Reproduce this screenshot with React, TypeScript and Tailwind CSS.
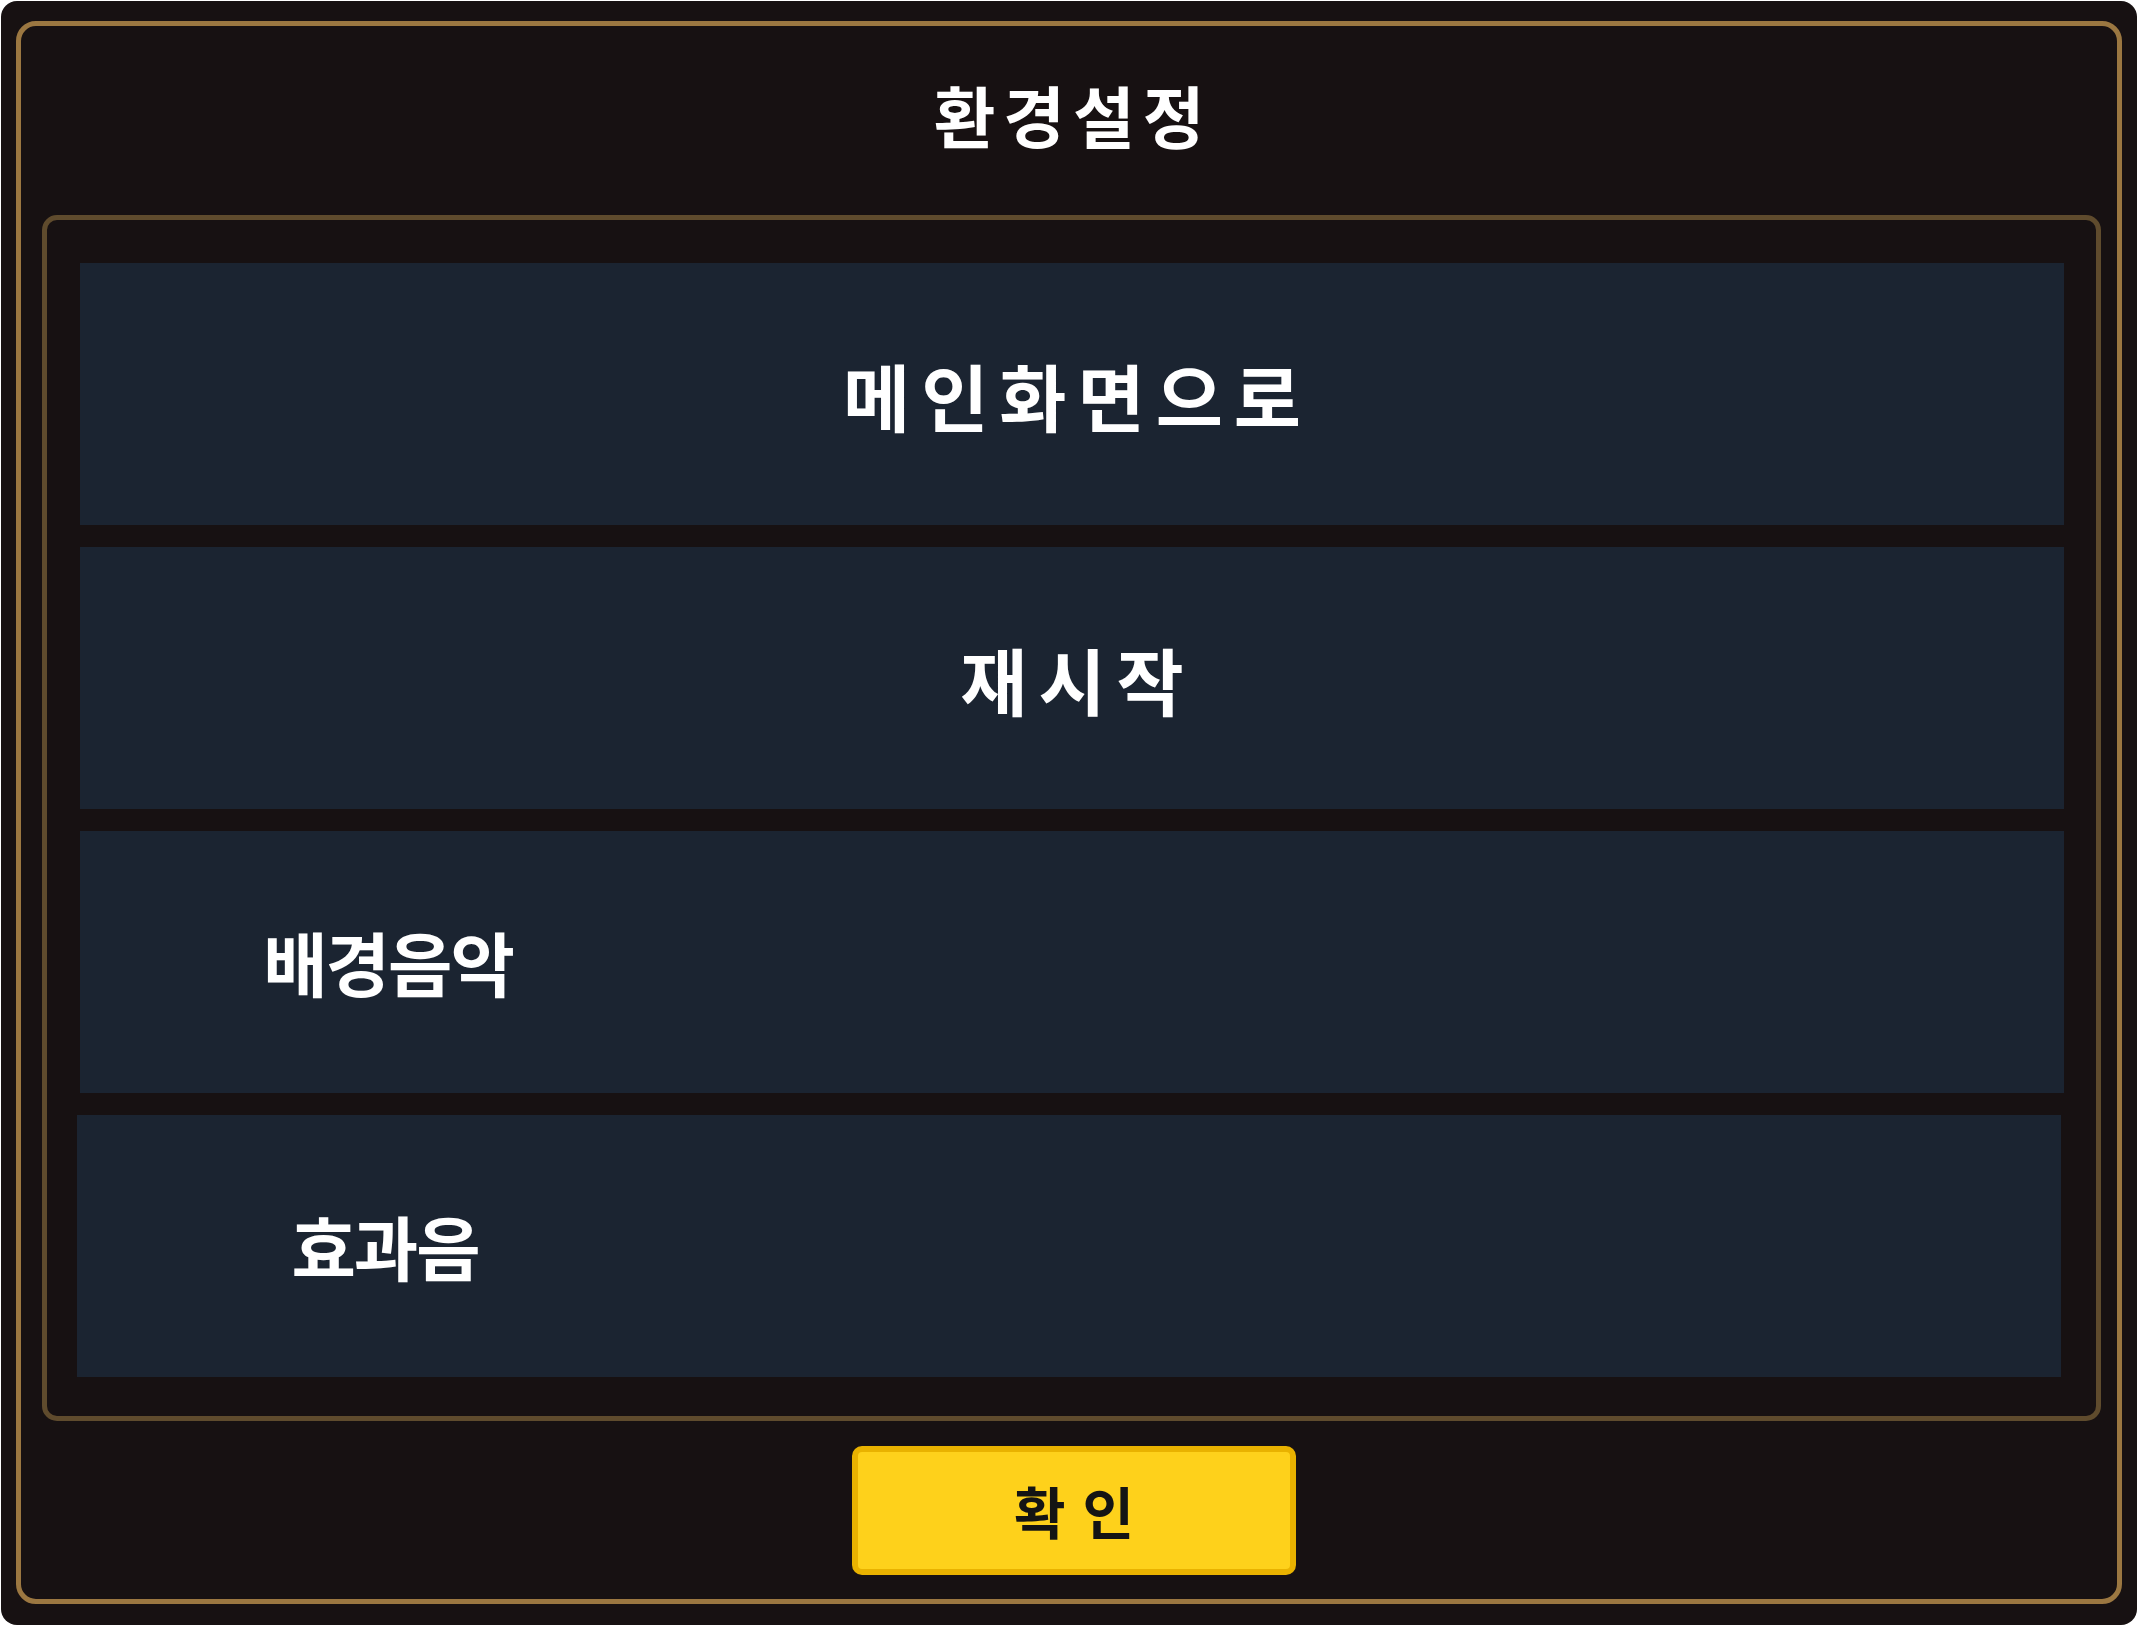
import React from "react";

const FONT = "font-['Noto_Sans_CJK_KR','Noto_Sans',sans-serif]";

function MenuRow({ label }: { label: string }) {
  return (
    <button className="flex h-[262px] w-full items-center justify-center bg-[#1b2431]">
      <span className="pl-[11px] text-[73px] font-bold leading-none tracking-[11px] text-white">{label}</span>
    </button>
  );
}

function VolumeRow({ label, shift }: { label: string; shift?: boolean }) {
  return (
    <div className={"flex h-[262px] w-full items-center bg-[#1b2431]" + (shift ? " -translate-x-[3px]" : "")}>
      <div className="w-[616px] text-center text-[70px] font-bold leading-none tracking-[-2px] text-white">{label}</div>
      <div className="flex-1" />
    </div>
  );
}

export default function App() {
  return (
    <div className={"h-screen bg-white p-px " + FONT}>
      <div className="flex h-full flex-col rounded-[16px] bg-[#171112] px-[15px] pt-[20px] pb-[21px]">
        <div className="flex flex-1 flex-col rounded-[20px] border-[5px] border-[#9b7741]">
          <header className="flex h-[189px] items-center justify-center pb-[14px]">
            <h1 className="pl-[8px] text-[67px] font-bold leading-none tracking-[8px] text-white">환경설정</h1>
          </header>

          <section className="ml-[21px] mr-[16px] flex flex-col gap-[22px] rounded-[15px] border-[5px] border-[#5f4b2d] pt-[43px] pr-[32px] pb-[39px] pl-[33px]">
            <MenuRow label="메인화면으로" />
            <MenuRow label="재시작" />
            <VolumeRow label="배경음악" />
            <VolumeRow label="효과음" shift />
          </section>

          <footer className="flex flex-1 items-center justify-center">
            <button className="ml-[10px] flex h-[129px] w-[444px] items-center justify-center rounded-[10px] border-[6px] border-[#e9b200] bg-[#fed11b]">
              <span className="pl-[17px] text-[56px] font-bold leading-none tracking-[17px] text-[#141414]">확인</span>
            </button>
          </footer>
        </div>
      </div>
    </div>
  );
}
